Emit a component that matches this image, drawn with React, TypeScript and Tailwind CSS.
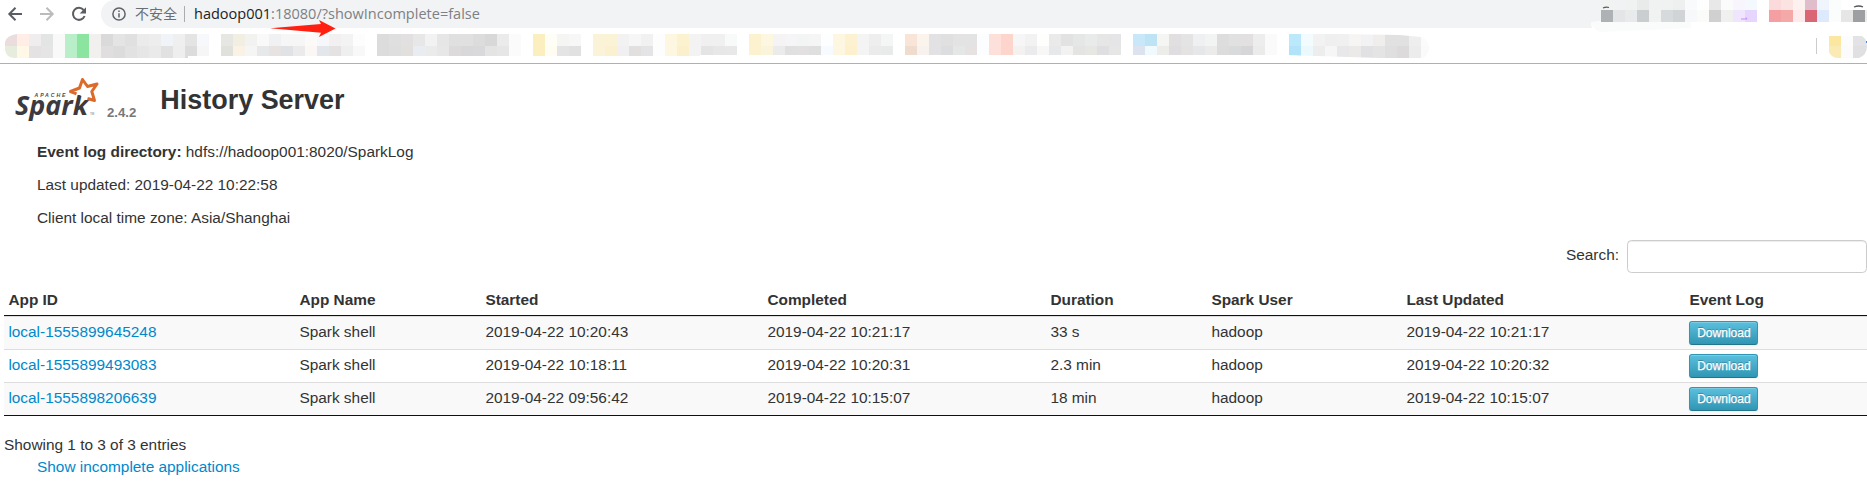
import React from "react";

type Cell = [string, string];

const bookmarkCells: string =
  "ebdcde/e6eddd ffede6/fff8e6 efeded/e4e2e3 e2e5e4/e5e5e6 f9f9f9/f9f9f9 b8efc8/b8efc8 8be5a0/8be5a0 f2f0ef/f2f0ef dadada/e0dedf e4e4e4/dcdcdc dfe0df/e2e2e2 ebebeb/e6e6e6 ededed/e9eae9 f0f3f7/e1e1e1 f0efef/eeeeee e4e4e4/dcdcdc f7f8fb/f6f6f6 ffffff/ffffff " +
  "e6e7e3/e1e1dc f3eee2/f9f2e5 f2f2f1/f5f5f5 f8f9f8/e7e8ea f0f1f2/e7e3e3 f6f6f6/e0e2e5 f6f6f6/ebebeb fbfaf9/faf7f4 f5f7fa/e3e6ea f3f0f2/e5e2e4 f3f3f3/efefef fdfdfd/f8f8f8 ffffff/ffffff " +
  "dcdcdc/dcdcdc dfdfdf/dedede e2e0e0/e2e0dd e7e7e7/e9ecf0 f2f2f2/ebebeb e6e6e6/e7e7e7 e0e0e0/dcdadb e0e0e0/d8d8da dcdcdc/d9d9dc d8d8d8/e4e4e4 ebebeb/e6e6e6 fbfbfb/fbfbfb ffffff/ffffff " +
  "fbeebf/fbeebf fefdf6/fffcf2 f5f6f3/e4e4e5 f7f7f7/e1e1e2 ffffff/ffffff faf3d7/faf3d7 fbf3d5/fbf0cf f2f2f3/f0f0f2 f6f6f6/e2e0de f1f1f2/e4e4e6 fdfdfe/fdfdfe fdf7e2/fdf7e2 fdf2d0/fcf0cc f3f3f3/f3f3f3 f0f0f1/e4e4e5 f1f0f1/e7e7e8 f7faf9/e8e8e9 ffffff/ffffff " +
  "fdf2d0/fdf2d0 fdf7e2/fbf4dc f6f3f4/ebebec f5f5f7/e1e0e1 f3f5f5/e2e0e1 f5f5f6/dfdfe0 fdfeff/f7fafe fdf7e2/fdf7e2 fcf2d1/fdf0cc f4f4f5/f4f4f5 efeeee/eaebea f4f5f5/e9eaea ffffff/ffffff " +
  "f9e5d7/f0dbcf faf4ed/f8f2ee e2e1e3/e2e1e3 e0e0e0/dcdddf e3e3e4/e5e6e6 e4e3e3/e6e2e2 fcfdff/fcfdff fde0da/fde0da fdd5cc/fdd5cc f6f6f6/f3f2f0 f2f2f2/ebebee fefefc/f7f7f7 eaeaeb/e7e8e9 e2e2e2/f2f2f2 e5e7e6/e4e4e2 e9eaea/e6e6e3 e6e6e7/dfdfe1 e5e5e7/e6e6e6 ffffff/ffffff " +
  "c8e7f8/dce3ee bee3f5/f0f9fe f5f5f3/ecece9 e2dfe1/dfdddf e5e4e4/e4e2e2 eff0f2/e5e7e8 f2f3f3/ebebeb dddddd/dcdcdc e1e1e1/d9dadb e2e0e1/d6d5d7 ededed/ebebeb fafafa/fafafa ffffff/ffffff " +
  "bbe9fb/b3e3f8 f2fcfe/ebf9fd f2f2f2/ededee efefef/f6f6f6 f1f0f1/e8e7e9 f6f5f4/ebeae9 f2f2f5/e1e1e3 efeeec/e5e4e5 e2e1e2/e0dfe0 e2e1e2/dcdadb eeeeef/ececed fbfbfb/fafafa";

const extensionCells: string =
  "f1f2f2/afb2b5 f1f2f3/e4e5e6 f0f2f2/e9eaeb e9ebeb/caced0 f0f1f1/f1f2f2 f0f1f1/d7dadb eeefef/d0d4d6 f9fafb/f6f8fa fdfefd/fbfbfa e8e8e8/d0d0d0 fbfbfb/f0f0ef f8f5fc/efe6fd f4f8ff/e6d6fd ffffff/ffffff fbdadc/f49fa1 fbe3e2/f4a8a8 fdf1f0/fdeaeb e0bdca/d96575 f0f5fd/dceafc fbfdfd/fbfdfc ffffff/e6e6e6 ffffff/9e9fa3 ffffff/ececec";

const parseCells = (s: string): Cell[] =>
  s.split(" ").map((p) => p.split("/").map((c) => "#" + c) as Cell);

function Mosaic({ cells, x, y, h1, h2 }: { cells: string; x: number; y: number; h1: number; h2: number }) {
  return (
    <g shapeRendering="crispEdges">
      {parseCells(cells).map(([a, b], i) => (
        <g key={i}>
          <rect x={x + i * 12} y={y} width={12} height={h1} fill={a} />
          <rect x={x + i * 12} y={y + h1} width={12} height={h2} fill={b} />
        </g>
      ))}
    </g>
  );
}

function Toolbar() {
  return (
    <div className="relative flex h-7 items-start">
      <svg className="h-7 w-[101px] shrink-0" viewBox="0 0 101 28" fill="none" strokeWidth="2">
        <path d="M22 14H9.5M15.5 7.8 9.3 14l6.2 6.2" stroke="#5a5d61" />
        <path d="M40 14h12.5M46.5 7.8l6.2 6.2-6.2 6.2" stroke="#b9bbbd" />
        <path d="M83.6 10A6 6 0 1 0 84.6 16" stroke="#5a5d61" />
        <path d="M86 7.2v6.3h-6.3z" fill="#5a5d61" />
      </svg>
      <div className="flex h-7 flex-1 items-center rounded-bl-[14px] rounded-tl-[14px] bg-[#f1f3f4] pl-[11px]">
        <svg className="size-[14px]" viewBox="0 0 14 14" fill="none" stroke="#5f6368" strokeWidth="1.5">
          <circle cx="7" cy="7" r="6.1" />
          <path d="M7 6.2v4.3M7 3.4v1.6" />
        </svg>
        <span className="mb-[2px] ml-[9px] w-[42px] whitespace-nowrap font-['Noto_Sans_CJK_SC',sans-serif] text-[14px] leading-[26px] text-[#6b6e72]">不安全</span>
        <span className="ml-[7px] h-4 w-px bg-[#a9acb0]" />
        <span className="mb-[2px] ml-[9px] whitespace-nowrap font-['Open_Sans',sans-serif] text-[14.53px] leading-[26px] text-[#7d8084]">
          <span className="text-[#202124]">hadoop001</span>:18080/?showIncomplete=false
        </span>
      </div>
      <svg className="absolute left-[1580px] top-0 h-9 w-[287px]" viewBox="1580 0 287 36">
        <path d="M1684 0h183v36h-270q-6-6-6-14l94-8z" fill="#fff" />
        <path d="M1591 22h100v6l-90 4q-8-2-10-10z" fill="#fafbfb" />
        <Mosaic cells={extensionCells} x={1601} y={0} h1={10} h2={12} />
        <path d="M1603 8q3-1.5 6-.5M1854 7q5-2 9 0" stroke="#55585c" strokeWidth="1.3" fill="none" />
        <path d="M1741 19h6l-1-1.5" stroke="#c98af5" fill="none" />
      </svg>
      <svg className="absolute left-[265px] top-[18px] h-5 w-[75px]" viewBox="265 18 75 20">
        <path d="M270 28.2 321 24l-2-4 16.5 8.6L319 37l2-4.3z" fill="#ff2012" />
      </svg>
    </div>
  );
}

function Bookmarks() {
  return (
    <div className="h-9 border-b border-[#b0b0b0]">
      <svg className="h-[35px] w-[1867px]" viewBox="0 28 1867 35">
        <defs>
          <clipPath id="smear">
            <path d="M5 42q2-7 12-8H1340L1400 35 1421 37q8 3 8 11-1 9-8 10.5L1380 58 1300 55.5 1290 55H700V56H188V58H14q-8-1-9-8z" />
          </clipPath>
          <clipPath id="tail">
            <path d="M1829 34h29q9 3 9 12t-8 12h-22q-6-1-8-6z" />
          </clipPath>
        </defs>
        <g clipPath="url(#smear)">
          <Mosaic cells={bookmarkCells} x={5} y={34} h1={12} h2={12} />
        </g>
        <rect x="1816" y="38" width="1" height="16" fill="#ccc" />
        <g clipPath="url(#tail)">
          <Mosaic cells="fbe7a0/faeab3 fcfcfc/fbfbfb e3e2e4/e0dfe1 e3e2e4/e0dfe1" x={1829} y={34} h1={12} h2={12} />
        </g>
        <rect x="1866" y="41" width="1" height="2" fill="#4285f4" />
      </svg>
    </div>
  );
}

function SparkLogo() {
  return (
    <svg className="h-[50px] w-[90px] shrink-0" viewBox="14 72 90 50">
      <text x="15" y="114.5" fontSize="27" fontWeight="bold" fontStyle="italic" fill="#3c3a3e" textLength="73" lengthAdjust="spacingAndGlyphs" fontFamily="Open Sans, sans-serif">Spark</text>
      <path d="M76.5 93.8 70.5 91.5 79.5 88 82.5 79.5 87.5 86.5 97 84 91.8 91.5 94.5 100.5 87.5 98.5" fill="#fff" stroke="#dc6a2b" strokeWidth="3" strokeLinejoin="round" />
      <text x="34.5" y="96.5" fontSize="5.2" fontWeight="bold" fontStyle="italic" fill="#4a4a4a" textLength="31" fontFamily="Liberation Sans, sans-serif">APACHE</text>
      <text x="90" y="115" fontSize="3" fill="#777" fontFamily="Liberation Sans, sans-serif">TM</text>
    </svg>
  );
}

const columns = ["App ID", "App Name", "Started", "Completed", "Duration", "Spark User", "Last Updated", "Event Log"];
const rows = [
  ["local-1555899645248", "Spark shell", "2019-04-22 10:20:43", "2019-04-22 10:21:17", "33 s", "hadoop", "2019-04-22 10:21:17"],
  ["local-1555899493083", "Spark shell", "2019-04-22 10:18:11", "2019-04-22 10:20:31", "2.3 min", "hadoop", "2019-04-22 10:20:32"],
  ["local-1555898206639", "Spark shell", "2019-04-22 09:56:42", "2019-04-22 10:15:07", "18 min", "hadoop", "2019-04-22 10:15:07"],
];

const gridCols = "grid grid-cols-[291px_186px_282px_283px_161px_195px_283px_1fr] pl-[4.4px]";

export default function App() {
  return (
    <div className="h-[490px] w-[1867px] overflow-hidden bg-white font-['Liberation_Sans',Arial,sans-serif] text-[15.4px] leading-[22px] text-[#333]">
      <Toolbar />
      <Bookmarks />
      <header className="flex h-[70px] pl-[14px] pt-2">
        <SparkLogo />
        <span className="ml-[3px] mt-[30px] text-[13.2px] font-bold leading-[22px] text-[#777]">2.4.2</span>
        <h3 className="ml-[24px] mt-[6px] text-[26.95px] font-bold leading-[44px]">History Server</h3>
      </header>
      <div className="flex flex-col gap-[11px] pl-[37px] pt-[7px]">
        <p><strong>Event log directory:</strong> hdfs://hadoop001:8020/SparkLog</p>
        <p>Last updated: 2019-04-22 10:22:58</p>
        <p>Client local time zone: Asia/Shanghai</p>
      </div>
      <div className="flex h-[51px] justify-end pt-[11px]">
        <label className="mr-2 mt-1">Search:</label>
        <input className="h-[33px] w-[240px] rounded-[4.4px] border border-[#ccc] bg-white shadow-[inset_0_1px_1px_rgba(0,0,0,0.075)]" />
      </div>
      <div className="ml-1">
        <div className={`${gridCols} h-[36px] border-b border-[#111] pt-[9px] font-bold`}>
          {columns.map((c) => <span key={c}>{c}</span>)}
        </div>
        <div className="border-b border-[#111]">
          {rows.map((r, i) => (
            <div key={r[0]} className={`${gridCols} h-[33px] border-t border-[#ddd] pt-[4px] ${i % 2 === 0 ? "bg-[#f9f9f9]" : "bg-white"}`}>
              {r.map((v, j) => <span key={j} className={j === 0 ? "text-[#08c]" : ""}>{v}</span>)}
              <button className="h-6 w-[69px] rounded-[3px] border border-[#2f96b4] border-b-[#24748c] bg-linear-to-b from-[#5bc0de] to-[#2f96b4] text-[12px] leading-[22px] text-white shadow-[inset_0_1px_0_rgba(255,255,255,0.2),0_1px_2px_rgba(0,0,0,0.05)] [-webkit-text-stroke:0.25px_white] [text-shadow:0_-1px_0_rgba(0,0,0,0.25)]">Download</button>
            </div>
          ))}
        </div>
      </div>
      <div className="pl-1 pt-[18px]">Showing 1 to 3 of 3 entries</div>
      <div className="pl-[37px] text-[#08c]">Show incomplete applications</div>
    </div>
  );
}
